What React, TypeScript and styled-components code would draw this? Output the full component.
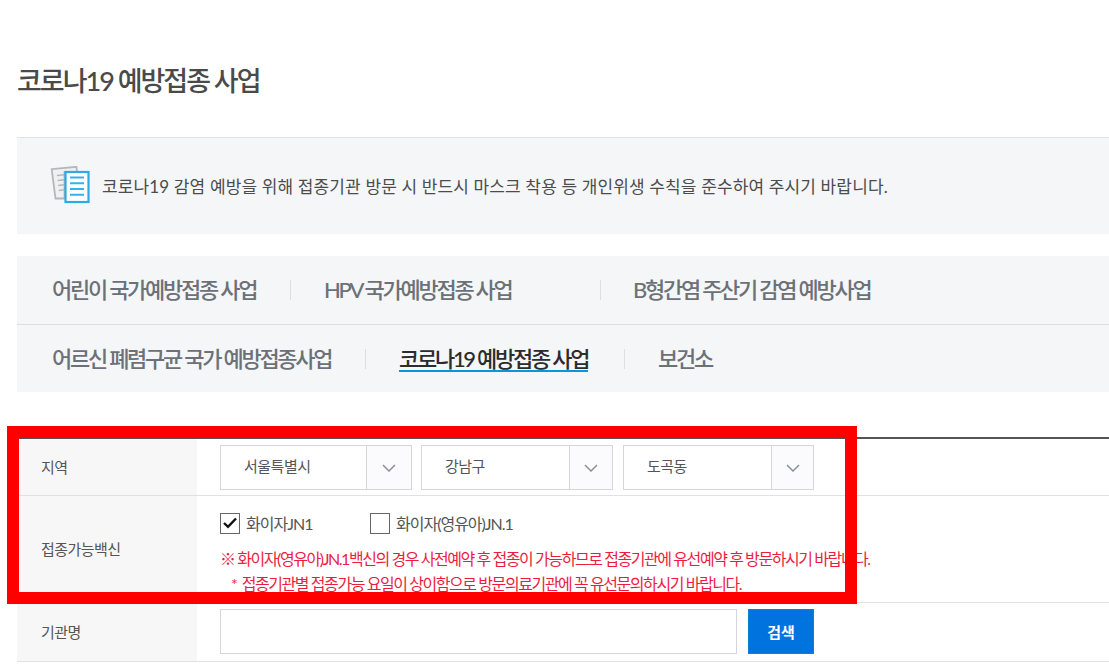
import styled, { createGlobalStyle } from 'styled-components'

const GlobalStyle = createGlobalStyle`
  html, body {
    margin: 0;
    padding: 0;
    height: 664px;
    overflow: hidden;
    background: #fff;
    font-family: "Lato", "Noto Sans CJK KR", sans-serif;
  }
`

const Page = styled.div`
  position: relative;
  width: 1109px;
  height: 664px;
  overflow: hidden;
  padding: 65px 0 0 17px;
  box-sizing: border-box;
`

const Title = styled.h1`
  margin: 0;
  height: 72px;
  font-size: 27px;
  line-height: 32px;
  font-weight: 500;
  letter-spacing: -2px;
  color: #4a4a4a;
  white-space: nowrap;
`

const Notice = styled.div`
  display: flex;
  align-items: center;
  gap: 12px;
  height: 97px;
  box-sizing: border-box;
  padding: 0 0 2px 33px;
  border-top: 1px solid #e2e2e2;
  background: #f4f6f8;
  font-size: 17px;
  letter-spacing: 0.14px;
  color: #4c4c4c;
  white-space: nowrap;
`

const Tabs = styled.div`
  margin-top: 22px;
  height: 136px;
  background: #f4f6f8;
`

const TabRow = styled.div<{ $border?: boolean }>`
  display: flex;
  align-items: center;
  height: 68px;
  box-sizing: border-box;
  padding-left: 35px;
  border-top: ${(p) => (p.$border ? '1px solid #dcdee1' : 'none')};
`

const Tab = styled.a<{ $width: number; $active?: boolean; $last?: boolean }>`
  position: relative;
  display: block;
  width: ${(p) => p.$width}px;
  font-size: 22px;
  line-height: 26px;
  font-weight: 500;
  letter-spacing: -2.28px;
  white-space: nowrap;
  color: ${(p) => (p.$active ? '#2c2c2c' : '#6b7177')};

  &::after {
    content: '';
    display: ${(p) => (p.$last ? 'none' : 'block')};
    position: absolute;
    right: 0;
    top: 3px;
    width: 1px;
    height: 20px;
    background: #dcdee1;
  }
`

const TabLabel = styled.span<{ $indent: number }>`
  margin-left: ${(p) => p.$indent}px;
`

const ActiveLabel = styled.span`
  display: inline-block;
  margin-left: 33px;
  margin-top: 1px;
  border-bottom: 2px solid #0f94d8;
  line-height: 22px;
`

const SearchTable = styled.div`
  margin-top: 45px;
  border-top: 2px solid #555;
`

const Row = styled.div<{ $height: number }>`
  display: flex;
  height: ${(p) => p.$height}px;
  box-sizing: border-box;
  border-bottom: 1px solid #e1e1e1;
`

const Label = styled.div`
  display: flex;
  align-items: center;
  flex: none;
  width: 180px;
  box-sizing: border-box;
  padding: 0 0 2px 24px;
  background: #f7f7f7;
  font-size: 15px;
  letter-spacing: -0.55px;
  color: #555;
`

const Cell = styled.div`
  flex: 1;
  padding-left: 23px;
  min-width: 0;
`

const Selects = styled.div`
  display: flex;
  gap: 9px;
  padding-top: 6px;
`

const Select = styled.div<{ $width: number; $gap: number }>`
  display: flex;
  flex: none;
  width: ${(p) => p.$width}px;
  height: 45px;
  box-sizing: border-box;
  border: 1px solid #d3d6dc;
  margin-left: ${(p) => p.$gap}px;
  background: #fff;
`

const SelectText = styled.div`
  flex: 1;
  padding-left: 23px;
  font-size: 15px;
  line-height: 40px;
  letter-spacing: -0.5px;
  color: #555;
`

const SelectArrow = styled.div<{ $arrow: number }>`
  display: flex;
  align-items: center;
  justify-content: center;
  flex: none;
  width: ${(p) => p.$arrow}px;
  border-left: 1px solid #d3d6dc;
  background: #fbfbfd;
`

const Checks = styled.div`
  display: flex;
  align-items: center;
  height: 22px;
  margin-top: 16px;
`

const CheckItem = styled.label<{ $width?: number }>`
  display: flex;
  align-items: center;
  gap: 6px;
  width: ${(p) => (p.$width ? `${p.$width}px` : 'auto')};
  font-size: 16px;
  letter-spacing: -1px;
  color: #555;
  white-space: nowrap;
`

const CheckBox = styled.span`
  display: flex;
  align-items: center;
  justify-content: center;
  width: 20px;
  height: 21px;
  box-sizing: border-box;
  border: 1px solid #666;
  background: #fff;
`

const Warning = styled.p<{ $indent?: number; $top: number }>`
  margin: ${(p) => p.$top}px 0 0 ${(p) => p.$indent ?? 0}px;
  font-size: 16px;
  line-height: 20px;
  letter-spacing: -1.43px;
  color: #ed1c3f;
  white-space: pre;
`

const SearchLine = styled.div`
  display: flex;
  gap: 11px;
  padding-top: 6px;
`

const TextInput = styled.input`
  width: 517px;
  height: 45px;
  box-sizing: border-box;
  border: 1px solid #d3d6dc;
  background: #fff;
  outline: none;
`

const SearchButton = styled.button`
  width: 66px;
  height: 45px;
  box-sizing: border-box;
  border: 1px solid #0b84d0;
  background: #0073df;
  color: #fff;
  font-family: inherit;
  font-size: 15px;
  font-weight: 700;
  padding: 0;
`

const Highlight = styled.div`
  position: absolute;
  left: 7px;
  top: 426px;
  width: 850px;
  height: 178px;
  box-sizing: border-box;
  border: 12px solid #ff0000;
  pointer-events: none;
`

const DocIcon = () => (
  <svg width="40" height="38" viewBox="0 0 40 38" fill="none">
    <path d="M1.7 3.2L26.5 0.8L27 6H14.5V32.5H5.5Z" fill="#eef0f1" stroke="#b4b8bc" strokeWidth="1.8" />
    <path d="M7 9.5L14.5 8.8M7.6 14.5L14.5 13.8M8.2 19.5L14.5 18.8M8.8 24.5L14.5 23.8" stroke="#b4b8bc" strokeWidth="1.4" />
    <rect x="15.5" y="6" width="23" height="30" fill="#ffffff" stroke="#2ea9e6" strokeWidth="2.2" />
    <path d="M20 11.5H34M20 17.3H34M20 23H34M20 28.7H34" stroke="#37b0ee" strokeWidth="2" />
  </svg>
)

const Chevron = () => (
  <svg width="14" height="8" viewBox="0 0 14 8" fill="none">
    <path d="M1 1L7 7L13 1" stroke="#8d9197" strokeWidth="1.5" />
  </svg>
)

const regions = [
  { name: '서울특별시', width: 192, arrow: 44, gap: 0 },
  { name: '강남구', width: 192, arrow: 42, gap: 0 },
  { name: '도곡동', width: 191, arrow: 41, gap: 1 },
]

function App() {
  return (
    <Page>
      <GlobalStyle />
      <Title>코로나19 예방접종 사업</Title>

      <Notice>
        <DocIcon />
        <span>코로나19 감염 예방을 위해 접종기관 방문 시 반드시 마스크 착용 등 개인위생 수칙을 준수하여 주시기 바랍니다.</span>
      </Notice>

      <Tabs>
        <TabRow>
          <Tab $width={239}>어린이 국가예방접종 사업</Tab>
          <Tab $width={310}><TabLabel $indent={33}>HPV 국가예방접종 사업</TabLabel></Tab>
          <Tab $width={300} $last><TabLabel $indent={32}>B형간염 주산기 감염 예방사업</TabLabel></Tab>
        </TabRow>
        <TabRow $border>
          <Tab $width={314}>어르신 폐렴구균 국가 예방접종사업</Tab>
          <Tab $width={259} $active><ActiveLabel>코로나19 예방접종 사업</ActiveLabel></Tab>
          <Tab $width={100} $last><TabLabel $indent={33}>보건소</TabLabel></Tab>
        </TabRow>
      </Tabs>

      <SearchTable>
        <Row $height={57}>
          <Label>지역</Label>
          <Cell>
            <Selects>
              {regions.map((r) => (
                <Select key={r.name} $width={r.width} $gap={r.gap}>
                  <SelectText>{r.name}</SelectText>
                  <SelectArrow $arrow={r.arrow}><Chevron /></SelectArrow>
                </Select>
              ))}
            </Selects>
          </Cell>
        </Row>
        <Row $height={107}>
          <Label>접종가능백신</Label>
          <Cell>
            <Checks>
              <CheckItem $width={150}>
                <CheckBox>
                  <svg width="14" height="12" viewBox="0 0 14 12" fill="none">
                    <path d="M1 6L5 9.8L13 1.5" stroke="#111" strokeWidth="2.4" />
                  </svg>
                </CheckBox>
                화이자JN1
              </CheckItem>
              <CheckItem>
                <CheckBox />
                화이자(영유아)JN.1
              </CheckItem>
            </Checks>
            <Warning $top={15}>※ 화이자(영유아)JN.1백신의 경우 사전예약 후 접종이 가능하므로 접종기관에 유선예약 후 방문하시기 바랍니다.</Warning>
            <Warning $top={5} $indent={11}>*  접종기관별 접종가능 요일이 상이함으로 방문의료기관에 꼭 유선문의하시기 바랍니다.</Warning>
          </Cell>
        </Row>
        <Row $height={59}>
          <Label>기관명</Label>
          <Cell>
            <SearchLine>
              <TextInput />
              <SearchButton>검색</SearchButton>
            </SearchLine>
          </Cell>
        </Row>
      </SearchTable>

      <Highlight />
    </Page>
  )
}

export default App
